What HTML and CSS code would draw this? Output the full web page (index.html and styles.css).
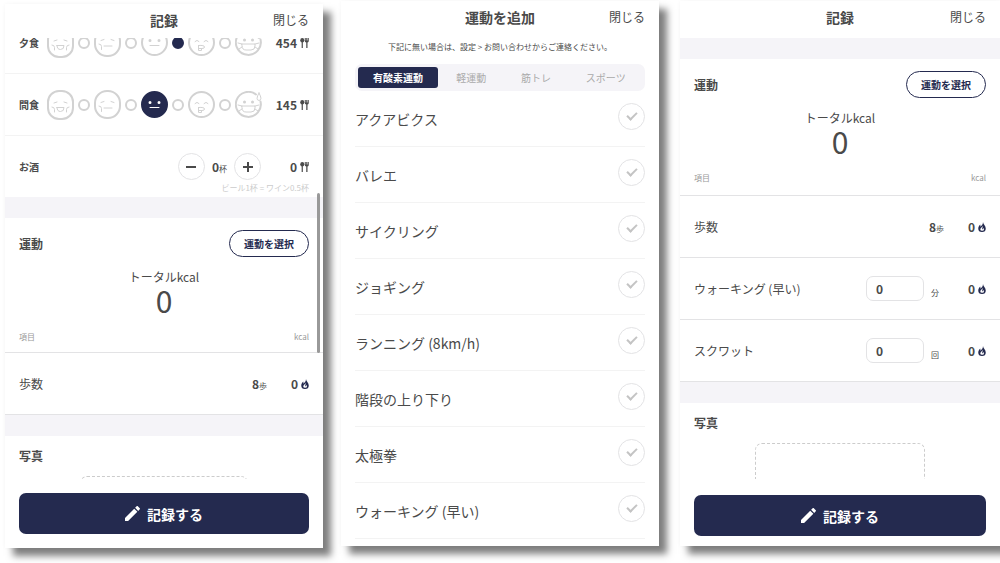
FILE: index.html
```html
<!DOCTYPE html>
<html lang="ja">

<head>
    <meta charset="UTF-8">
    <meta name="viewport" content="width=device-width, initial-scale=1.0">
    <title>記録</title>
    <link rel="stylesheet" href="styles.css">
</head>

<body>
    <!-- Shared icons -->
    <svg class="sprite" aria-hidden="true">
        <symbol id="face-full" viewBox="0 0 27 30">
            <rect x="1" y="1" width="25" height="28" rx="11" />
            <path class="thin" d="M7 13l3-1M20 13l-3-1M5 17q2.500 0 2.500 2.500v2.500M22 17q-2.500 0-2.500 2.500v2.500M10 17.500h7q0 4-3.500 4t-3.500-4z" />
        </symbol>
        <symbol id="face-more" viewBox="0 0 27 29">
            <rect x="1" y="1" width="25" height="27" rx="12" />
            <path class="thin" d="M7 12.500l3-1M20 12.500l-3-1M5 16q2.500 0 2.500 2.500v3M10 18h8" />
        </symbol>
        <symbol id="face-normal" viewBox="0 0 27 27">
            <circle cx="13.500" cy="13.500" r="12.500" />
            <path class="eyes" d="M9 11.500h.01M18 11.500h.01" />
            <path class="thin" d="M9 16.500h9" />
        </symbol>
        <symbol id="face-less" viewBox="0 0 27 27">
            <circle cx="13.500" cy="13.500" r="12.500" />
            <path class="thin" d="M7 12.500q2-2.500 4 0M16 12.500q2-2.500 4 0M10.500 16.500q6-.5 6 1.500 0 1.500-2.500 1.500h-3.500M10.500 16.500v5h3v-2" />
        </symbol>
        <symbol id="face-hungry" viewBox="0 0 27 27">
            <path d="M25.500 10.500A12.500 12.500 0 1 1 21 3.500" />
            <path class="eyes" d="M9.500 11h.01M17.500 11h.01" />
            <path class="thin" d="M7 15h13v2q0 4-4 4h-5q-4 0-4-4zM7 15l-4-1M20 15l4-1M7 18l-3 2M20 18l3 2M24 2q-4 7 0 7.500 4-.5 0-7.500z" />
        </symbol>
        <symbol id="cutlery" viewBox="0 0 18 20">
            <ellipse cx="4.500" cy="4.500" rx="4" ry="4.500" />
            <path d="M3.300 8h2.400v12H3.300zM9.500 0h2v5h1V0h2v5h1V0h2v6q0 2.500-2.500 3v11h-2.500V9q-3-.5-3-3z" />
        </symbol>
        <symbol id="flame" viewBox="0 0 16 20">
            <path fill-rule="evenodd" d="M10 0c0 4 5.500 7 5.500 13a7.500 7 0 0 1-15 0c0-4 2-6 4-8 .5 1.500.5 3 0 4.500C8 7 10 4 10 0zM9.500 7C9 10.500 4.500 12 4.500 14.500a3.500 3 0 0 0 7.500 0c0-1-.5-2-1.500-2.500 0 1.500-.5 2.500-2 2.500C8 12 10 10 9.500 7z" />
        </symbol>
        <symbol id="pencil" viewBox="3 3 18 18">
            <path d="M3 17.250V21h3.750L17.810 9.940l-3.750-3.750L3 17.250zM20.710 7.040c.39-.39.39-1.020 0-1.410l-2.340-2.340c-.39-.39-1.020-.39-1.410 0l-1.830 1.830 3.750 3.750 1.830-1.830z" />
        </symbol>
    </svg>

    <main class="screens">
        <!-- Record: meals -->
        <section class="screen screen-meal">
            <header class="screen-header">
                <h1>記録</h1>
                <button class="close">閉じる</button>
            </header>
            <div class="screen-body scrolled">
                <div class="row">
                    <span class="meal-name">夕食</span>
                    <div class="scale" role="radiogroup" aria-label="夕食">
                        <label class="face"><input type="radio" name="dinner"><svg height="30"><use href="#face-full" /></svg></label>
                        <input class="dot" type="radio" name="dinner">
                        <label class="face"><input type="radio" name="dinner"><svg height="29"><use href="#face-more" /></svg></label>
                        <input class="dot" type="radio" name="dinner">
                        <label class="face"><input type="radio" name="dinner"><svg height="27"><use href="#face-normal" /></svg></label>
                        <input class="dot" type="radio" name="dinner" checked>
                        <label class="face"><input type="radio" name="dinner"><svg height="27"><use href="#face-less" /></svg></label>
                        <input class="dot" type="radio" name="dinner">
                        <label class="face"><input type="radio" name="dinner"><svg height="27"><use href="#face-hungry" /></svg></label>
                    </div>
                    <div class="kcal">454<svg class="icon"><use href="#cutlery" /></svg></div>
                </div>
                <div class="row">
                    <span class="meal-name">間食</span>
                    <div class="scale" role="radiogroup" aria-label="間食">
                        <label class="face"><input type="radio" name="snack"><svg height="30"><use href="#face-full" /></svg></label>
                        <input class="dot" type="radio" name="snack">
                        <label class="face"><input type="radio" name="snack"><svg height="29"><use href="#face-more" /></svg></label>
                        <input class="dot" type="radio" name="snack">
                        <label class="face"><input type="radio" name="snack" checked><svg height="27"><use href="#face-normal" /></svg></label>
                        <input class="dot" type="radio" name="snack">
                        <label class="face"><input type="radio" name="snack"><svg height="27"><use href="#face-less" /></svg></label>
                        <input class="dot" type="radio" name="snack">
                        <label class="face"><input type="radio" name="snack"><svg height="27"><use href="#face-hungry" /></svg></label>
                    </div>
                    <div class="kcal">145<svg class="icon"><use href="#cutlery" /></svg></div>
                </div>
                <div class="drink">
                    <div class="drink-main">
                        <span class="meal-name">お酒</span>
                        <div class="stepper">
                            <button aria-label="減らす"><svg viewBox="0 0 12 12"><path d="M1 6h10" /></svg></button>
                            <span class="amount">0<small>杯</small></span>
                            <button aria-label="増やす"><svg viewBox="0 0 12 12"><path d="M1 6h10M6 1v10" /></svg></button>
                        </div>
                        <div class="kcal">0<svg class="icon"><use href="#cutlery" /></svg></div>
                    </div>
                    <p class="drink-note">ビール1杯 = ワイン0.5杯</p>
                </div>

                <div class="band"></div>
                <div class="exercise">
                    <div class="exercise-head">
                        <h2>運動</h2>
                        <button class="select-btn">運動を選択</button>
                    </div>
                    <div class="total">
                        <p>トータルkcal</p>
                        <strong>0</strong>
                    </div>
                    <div class="columns"><span>項目</span><span>kcal</span></div>
                </div>
                <div class="row row-line">
                    <span class="item-name">歩数</span>
                    <span class="amount">8<small>歩</small></span>
                    <div class="kcal">0<svg class="icon flame"><use href="#flame" /></svg></div>
                </div>

                <div class="band"></div>
                <div class="photo">
                    <h2>写真</h2>
                    <div class="dropzone"></div>
                </div>
                <div class="scrollbar"></div>
            </div>
            <footer class="screen-footer">
                <button class="save-btn"><svg><use href="#pencil" /></svg>記録する</button>
            </footer>
        </section>

        <!-- Add exercise -->
        <section class="screen screen-add">
            <header class="screen-header">
                <h1>運動を追加</h1>
                <button class="close">閉じる</button>
            </header>
            <p class="hint">下記に無い場合は、設定 &gt; お問い合わせからご連絡ください。</p>
            <div class="tabs">
                <button class="tab active">有酸素運動</button>
                <button class="tab">軽運動</button>
                <button class="tab">筋トレ</button>
                <button class="tab">スポーツ</button>
            </div>
            <div class="options">
                <label class="option">アクアビクス<input type="checkbox"></label>
                <label class="option">バレエ<input type="checkbox"></label>
                <label class="option">サイクリング<input type="checkbox"></label>
                <label class="option">ジョギング<input type="checkbox"></label>
                <label class="option">ランニング (8km/h)<input type="checkbox"></label>
                <label class="option">階段の上り下り<input type="checkbox"></label>
                <label class="option">太極拳<input type="checkbox"></label>
                <label class="option">ウォーキング (早い)<input type="checkbox"></label>
            </div>
        </section>

        <!-- Record: exercise -->
        <section class="screen screen-exercise">
            <header class="screen-header">
                <h1>記録</h1>
                <button class="close">閉じる</button>
            </header>
            <div class="screen-body">
                <div class="band"></div>
                <div class="exercise">
                    <div class="exercise-head">
                        <h2>運動</h2>
                        <button class="select-btn">運動を選択</button>
                    </div>
                    <div class="total">
                        <p>トータルkcal</p>
                        <strong>0</strong>
                    </div>
                    <div class="columns"><span>項目</span><span>kcal</span></div>
                </div>
                <div class="row row-line">
                    <span class="item-name">歩数</span>
                    <span class="amount">8<small>歩</small></span>
                    <div class="kcal">0<svg class="icon flame"><use href="#flame" /></svg></div>
                </div>
                <div class="row row-line">
                    <label class="item-name" for="walking">ウォーキング (早い)</label>
                    <span class="field"><input type="text" id="walking" value="0"><small>分</small></span>
                    <div class="kcal">0<svg class="icon flame"><use href="#flame" /></svg></div>
                </div>
                <div class="row row-line">
                    <label class="item-name" for="squat">スクワット</label>
                    <span class="field"><input type="text" id="squat" value="0"><small>回</small></span>
                    <div class="kcal">0<svg class="icon flame"><use href="#flame" /></svg></div>
                </div>

                <div class="band"></div>
                <div class="photo">
                    <h2>写真</h2>
                    <div class="dropzone"></div>
                </div>
            </div>
            <footer class="screen-footer">
                <button class="save-btn"><svg><use href="#pencil" /></svg>記録する</button>
            </footer>
        </section>
    </main>
</body>

</html>
```

FILE: styles.css
```css
* {
    box-sizing: border-box;
}

body {
    margin: 0;
    background: #fff;
    color: #4a4a4a;
    font-family: "Noto Sans CJK JP", sans-serif;
    font-size: 12px;
    line-height: 18px;
}

h1,
h2,
p {
    margin: 0;
}

button,
input {
    margin: 0;
    padding: 0;
    border: none;
    background: none;
    color: inherit;
    font: inherit;
}

button {
    cursor: pointer;
}

small {
    font-size: 8px;
    font-weight: 400;
    line-height: 8px;
}

.sprite {
    display: none;
}

/* Screens */
.screens {
    display: flex;
    height: 100vh;
    padding: 0 0 15px 5px;
    overflow: hidden;
}

.screen {
    display: flex;
    flex: 318 1 0;
    flex-direction: column;
    min-width: 0;
    background: #fff;
    box-shadow: 8px 8px 7px rgba(0, 0, 0, 0.5), 0 0 4px rgba(0, 0, 0, 0.04);
}

.screen-meal {
    margin: 4px 18px 0 0;
}

.screen-add {
    margin: 1px 21px 2px 0;
}

.screen-exercise {
    flex-grow: 320;
    margin: 1px 0 2px;
}

.screen-header {
    display: grid;
    grid-template-columns: 1fr auto 1fr;
    flex: none;
    align-items: center;
    height: 34px;
    padding: 0 14px 2px;
}

.screen-header h1 {
    grid-column: 2;
    font-size: 14px;
    font-weight: 700;
}

.close {
    justify-self: end;
}

.screen-body {
    position: relative;
    flex: 1;
    min-height: 0;
    overflow: hidden;
}

.screen-exercise .screen-body {
    padding-top: 3px;
}

.scrolled .row:first-child {
    margin-top: -26px;
}

.scrollbar {
    position: absolute;
    top: 155px;
    right: 3px;
    width: 3px;
    height: 160px;
    border-radius: 2px;
    background: #999;
}

.band {
    height: 21px;
    background: #f5f4f8;
}

/* Rows */
.row {
    display: flex;
    align-items: center;
    height: 62px;
    padding: 0 14px;
    border-bottom: 1px solid #f3f3f3;
}

.row-line {
    border-bottom-color: #e3e3e5;
}

.meal-name {
    flex: none;
    width: 28px;
    font-size: 10px;
    font-weight: 700;
}

.item-name {
    flex: 1;
}

.amount {
    font-weight: 700;
}

.kcal {
    display: flex;
    flex: none;
    align-items: center;
    justify-content: flex-end;
    gap: 3px;
    width: 42px;
    font-weight: 700;
}

.scale + .kcal {
    margin-left: auto;
}

.icon {
    width: 9px;
    height: 10px;
    fill: #4a4a4a;
}

.flame {
    width: 8px;
    fill: #242a4f;
}

/* Meal scale */
.scale {
    display: flex;
    align-items: center;
    gap: 4px;
}

.face,
.face svg {
    display: block;
    width: 27px;
}

.face {
    position: relative;
    cursor: pointer;
}

.face input {
    position: absolute;
    inset: 0;
    opacity: 0;
}

.face svg {
    fill: none;
    stroke: #d2d2d2;
    stroke-width: 2px;
    stroke-linecap: round;
}

.thin {
    stroke-width: 1px;
}

.eyes {
    stroke-width: 3px;
}

.face input:checked + svg {
    --face-fill: #242a4f;
    stroke: #fff;
}

#face-normal circle {
    fill: var(--face-fill, none);
    stroke: var(--face-fill, #d2d2d2);
}

.dot {
    width: 12px;
    height: 12px;
    border: 2px solid #d2d2d2;
    border-radius: 50%;
    appearance: none;
}

.dot:checked {
    border-color: #242a4f;
    background: #242a4f;
}

/* Drinks */
.drink {
    padding: 17px 14px 3px;
}

.drink-main {
    display: flex;
    align-items: center;
}

.stepper {
    display: flex;
    align-items: center;
    gap: 7px;
    margin: 0 6px 0 auto;
}

.stepper button {
    display: flex;
    align-items: center;
    justify-content: center;
    width: 27px;
    height: 27px;
    border: 1px solid #e3e3e5;
    border-radius: 50%;
}

.stepper svg {
    width: 12px;
    height: 12px;
    stroke: #4a4a4a;
    stroke-width: 2px;
}

.drink-note {
    margin-top: 2px;
    color: #ccc;
    font-size: 8px;
    line-height: 12px;
    text-align: right;
}

/* Exercise */
h2 {
    font-size: 12px;
    font-weight: 700;
}

.exercise {
    padding: 12px 14px 6px;
    border-bottom: 1px solid #e3e3e5;
}

.screen-exercise .exercise {
    padding-bottom: 8px;
}

.exercise-head {
    display: flex;
    align-items: center;
    justify-content: space-between;
}

.select-btn {
    width: 80px;
    height: 27px;
    border: 1px solid #242a4f;
    border-radius: 14px;
    color: #242a4f;
    font-size: 10px;
    font-weight: 700;
}

.total {
    margin-top: 11px;
    text-align: center;
}

.total strong {
    display: block;
    font-size: 30px;
    font-weight: 400;
    line-height: 28px;
}

.columns {
    display: flex;
    justify-content: space-between;
    margin-top: 14px;
    color: #999;
    font-size: 8px;
}

.field {
    display: flex;
    align-items: flex-end;
    gap: 7px;
    padding-right: 5px;
}

.field input {
    width: 58px;
    height: 25px;
    padding: 0 9px;
    border: 1px solid #e3e3e5;
    border-radius: 7px;
    font-weight: 700;
}

.field small {
    padding-bottom: 4px;
}

/* Photo */
.photo {
    padding: 11px 14px;
}

.dropzone {
    width: 58%;
    height: 120px;
    margin: 11px auto 0;
    border: 1px dashed #ccc;
    border-radius: 7px;
}

/* Save button */
.screen-footer {
    flex: none;
    padding: 14px;
}

.screen-exercise .screen-footer {
    padding: 16px 14px 10px;
}

.save-btn {
    display: flex;
    align-items: center;
    justify-content: center;
    gap: 7px;
    width: 100%;
    height: 41px;
    border-radius: 7px;
    background: #242a4f;
    color: #fff;
    font-size: 14px;
    font-weight: 700;
}

.save-btn svg {
    width: 15px;
    height: 15px;
    fill: #fff;
}

/* Add exercise */
.hint {
    margin-top: 3px;
    font-size: 8px;
    text-align: center;
}

.tabs {
    display: flex;
    flex: none;
    gap: 2px;
    height: 27px;
    margin: 8px 14px 0;
    padding: 3px;
    border-radius: 7px;
    background: #f5f4f8;
}

.tab {
    flex: auto;
    color: #aaa;
    font-size: 10px;
}

.tab.active {
    flex: none;
    padding: 0 15px;
    border-radius: 3px;
    background: #242a4f;
    color: #fff;
    font-weight: 700;
}

.options {
    flex: 1;
    min-height: 0;
    padding: 0 14px;
    overflow: hidden;
}

.option {
    display: flex;
    align-items: flex-end;
    justify-content: space-between;
    padding: 12px 0 16px;
    border-bottom: 1px solid #f3f3f3;
    font-size: 14px;
    line-height: 22px;
}

.option input {
    display: flex;
    justify-content: center;
    width: 27px;
    height: 27px;
    border: 1px solid #e3e3e5;
    border-radius: 50%;
    appearance: none;
}

.option input::before {
    content: "";
    box-sizing: border-box;
    width: 10px;
    height: 6px;
    margin-top: 8px;
    border: solid #c4c4c4;
    border-width: 0 0 2px 2px;
    transform: rotate(-45deg);
}
```
